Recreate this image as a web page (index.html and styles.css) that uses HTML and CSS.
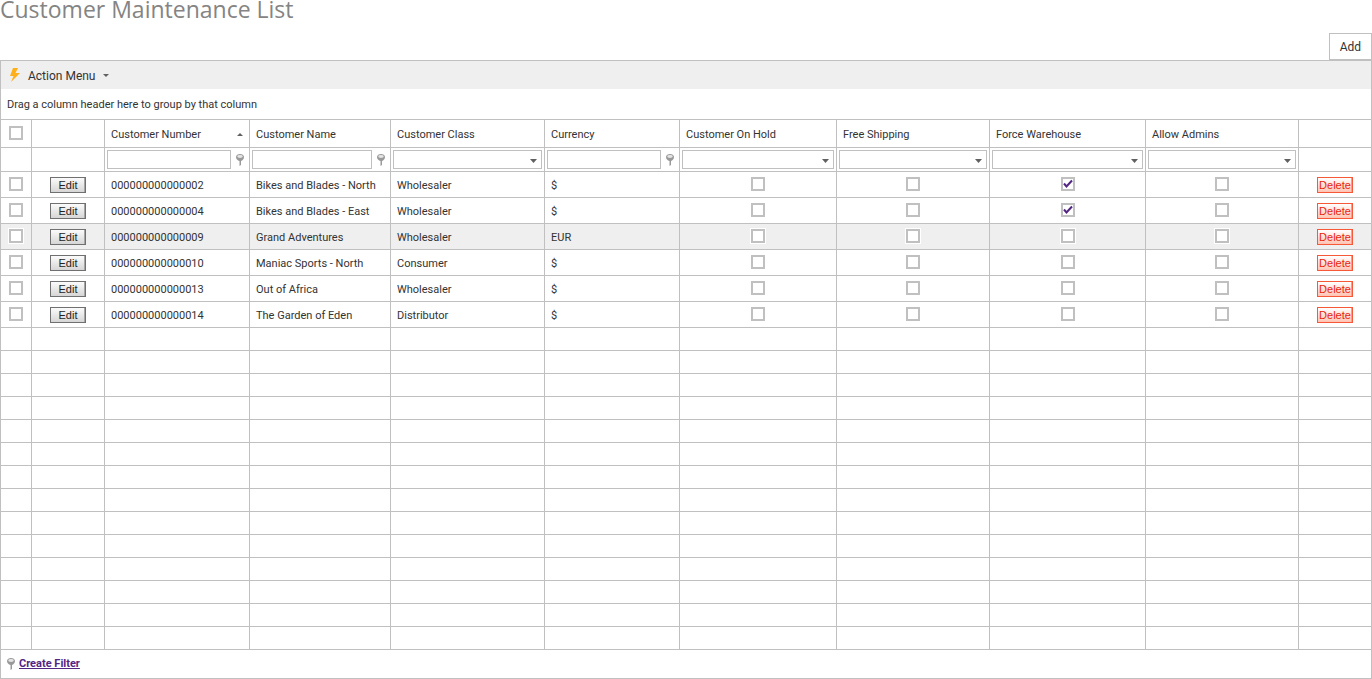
FILE: index.html
```html
<!DOCTYPE html>
<html lang="en">

<head>
  <meta charset="UTF-8">
  <meta name="viewport" content="width=device-width, initial-scale=1.0">
  <title>Customer Maintenance List</title>
  <link rel="stylesheet" href="styles.css">
</head>

<body>
  <!-- shared filter icon -->
  <svg class="defs" width="0" height="0" aria-hidden="true">
    <symbol id="pin" viewBox="0 0 9 12">
      <path d="M0 3C0 1 2 0 4 0S8 1 8 3C8 5 6.500 6.500 5 7V11L3.500 12V7C1.500 6.500 0 5 0 3Z" fill="#999" />
      <ellipse cx="4" cy="2.500" rx="2.800" ry="1.400" fill="#e4e4e4" />
    </symbol>
  </svg>

  <header class="page-header">
    <h1>Customer Maintenance List</h1>
    <button type="button" class="add">Add</button>
  </header>

  <main class="grid">
    <div class="toolbar">
      <button type="button" class="action-menu">
        <svg class="bolt" viewBox="0 0 11 14" aria-hidden="true">
          <path d="M4 0H9L6.500 5H11L2 14L4.500 8H1Z" fill="#fdb01a" />
        </svg>
        <span>Action Menu</span>
        <i class="caret"></i>
      </button>
    </div>
    <div class="group-panel">Drag a column header here to group by that column</div>

    <table>
      <colgroup>
        <col class="c-select">
        <col class="c-edit">
        <col class="c-number">
        <col class="c-name">
        <col class="c-class">
        <col class="c-currency">
        <col class="c-hold">
        <col class="c-shipping">
        <col class="c-warehouse">
        <col class="c-admins">
        <col class="c-delete">
      </colgroup>
      <thead>
        <tr class="titles">
          <th class="center"><input type="checkbox" aria-label="Select all"></th>
          <th></th>
          <th><div class="sorted">Customer Number <i class="sort-asc"></i></div></th>
          <th>Customer Name</th>
          <th>Customer Class</th>
          <th>Currency</th>
          <th>Customer On Hold</th>
          <th>Free Shipping</th>
          <th>Force Warehouse</th>
          <th>Allow Admins</th>
          <th></th>
        </tr>
        <tr class="filters">
          <td></td>
          <td></td>
          <td><div class="filter"><input type="text" aria-label="Filter customer number"><svg class="pin"><use href="#pin" /></svg></div></td>
          <td><div class="filter"><input type="text" aria-label="Filter customer name"><svg class="pin"><use href="#pin" /></svg></div></td>
          <td><div class="filter"><select aria-label="Filter customer class"><option></option></select></div></td>
          <td><div class="filter"><input type="text" aria-label="Filter currency"><svg class="pin"><use href="#pin" /></svg></div></td>
          <td><div class="filter"><select aria-label="Filter customer on hold"><option></option></select></div></td>
          <td><div class="filter"><select aria-label="Filter free shipping"><option></option></select></div></td>
          <td><div class="filter"><select aria-label="Filter force warehouse"><option></option></select></div></td>
          <td><div class="filter"><select aria-label="Filter allow admins"><option></option></select></div></td>
          <td></td>
        </tr>
      </thead>
      <tbody id="rows"></tbody>
    </table>

    <footer class="filter-bar">
      <svg class="pin"><use href="#pin" /></svg>
      <a href="#">Create Filter</a>
    </footer>
  </main>

  <script src="script.js"></script>
</body>

</html>
```
FILE: styles.css
```css
* {
  margin: 0;
  padding: 0;
  box-sizing: border-box;
}

body {
  font-family: Roboto, "Open Sans", sans-serif;
  font-size: 11px;
  line-height: 16px;
  color: #333;
  background-color: #fff;
}

button,
input,
select {
  font-family: inherit;
  color: inherit;
  border-radius: 0;
}

.defs {
  position: absolute;
}

.page-header {
  display: flex;
  justify-content: space-between;
  align-items: flex-end;
  height: 60px;
}

h1 {
  align-self: flex-start;
  font-family: "Open Sans", "Noto Sans", sans-serif;
  font-size: 23px;
  line-height: 18px;
  font-weight: 400;
  color: #848484;
}

.add {
  padding: 5px 10px 3px;
  border: 1px solid #c0c0c0;
  background-color: #fff;
  font-size: 12px;
  line-height: 17px;
}

.grid {
  border: 1px solid #c0c0c0;
}

.toolbar {
  padding: 0 8px;
  background-color: #efefef;
}

.action-menu {
  display: flex;
  align-items: center;
  gap: 8px;
  height: 28px;
  border: none;
  background: none;
  font-size: 12px;
}

.action-menu span {
  padding-top: 2px;
}

.bolt {
  width: 11px;
  height: 14px;
}

.caret,
.sort-asc {
  border: 3px solid transparent;
}

.caret {
  border-top-color: #606060;
  border-bottom-width: 0;
}

.sort-asc {
  border-bottom-color: #606060;
  border-top-width: 0;
}

.group-panel {
  padding: 8px 6px 6px;
  border-bottom: 1px solid #c0c0c0;
}

/* table */
table {
  width: 100%;
  table-layout: fixed;
  border-spacing: 0;
}

.c-select { width: 31px; }
.c-edit { width: 73px; }
.c-number { width: 145px; }
.c-name { width: 141px; }
.c-class { width: 154px; }
.c-currency { width: 135px; }
.c-hold { width: 157px; }
.c-shipping { width: 153px; }
.c-warehouse { width: 156px; }
.c-admins { width: 153px; }
.c-delete { width: 72px; }

th,
td {
  padding: 2px 6px 0;
  border-right: 1px solid #c0c0c0;
  border-bottom: 1px solid #c0c0c0;
  font-weight: 400;
  text-align: left;
  white-space: nowrap;
}

th:last-child,
td:last-child {
  border-right: none;
}

.titles th {
  height: 28px;
}

.data td {
  height: 26px;
}

.empty td {
  height: 23px;
}

.selected td {
  background-color: #efefef;
}

th.center,
td.center {
  padding: 0;
  text-align: center;
}

.sorted {
  display: flex;
  align-items: center;
  justify-content: space-between;
}

.filters td {
  height: 24px;
  padding: 2px;
}

.filter {
  display: flex;
  align-items: center;
}

.filter input,
.filter select {
  flex: 1;
  min-width: 0;
  height: 19px;
  border: 1px solid #c0c0c0;
  background-color: #fff;
}

.filter select {
  appearance: none;
  background-image: url("data:image/svg+xml,%3Csvg xmlns='http://www.w3.org/2000/svg' width='7' height='4'%3E%3Cpath d='M0 0H7L3.500 4Z' fill='%23606060'/%3E%3C/svg%3E");
  background-repeat: no-repeat;
  background-position: right 4px top 8px;
}

.pin {
  flex: none;
  width: 9px;
  height: 12px;
}

.filter .pin {
  margin: 0 2px 0 5px;
}

input[type="checkbox"] {
  appearance: none;
  display: block;
  width: 14px;
  height: 14px;
  margin: 0 auto 1px;
  border: 2px solid #c0c0c0;
  background-color: #fff;
  box-shadow: 0 0 0 1px #fff;
}

input[type="checkbox"]:checked {
  background-image: url("data:image/svg+xml,%3Csvg xmlns='http://www.w3.org/2000/svg' width='10' height='10'%3E%3Cpath d='M1 4.500L3.500 7.500L9 1.500' fill='none' stroke='%23522583' stroke-width='2'/%3E%3C/svg%3E");
}

.edit,
.delete {
  display: block;
  width: 36px;
  height: 16px;
  margin: 0 auto;
  border: 1px solid #707070;
  background-image: linear-gradient(#fbfbfb, #d6d6d6);
  box-shadow: inset -1px 0 0 #a6a6a6;
  font-family: "Liberation Sans", Arial, sans-serif;
  font-size: 11px;
  line-height: 14px;
  color: #222;
}

.delete {
  border-color: #f75838;
  background-image: linear-gradient(#fff, #ffc4b4);
  box-shadow: inset -1px 0 0 #ff9c86;
  color: #e8240c;
}

.filter-bar {
  display: flex;
  align-items: center;
  gap: 3px;
  height: 28px;
  padding: 0 6px 1px;
}

.filter-bar a {
  font-weight: 700;
  color: #522583;
}
```
FILE: script.js
```js
const customers = [
  { number: "000000000000002", name: "Bikes and Blades - North", type: "Wholesaler", currency: "$", warehouse: true },
  { number: "000000000000004", name: "Bikes and Blades - East", type: "Wholesaler", currency: "$", warehouse: true },
  { number: "000000000000009", name: "Grand Adventures", type: "Wholesaler", currency: "EUR", selected: true },
  { number: "000000000000010", name: "Maniac Sports - North", type: "Consumer", currency: "$" },
  { number: "000000000000013", name: "Out of Africa", type: "Wholesaler", currency: "$" },
  { number: "000000000000014", name: "The Garden of Eden", type: "Distributor", currency: "$" },
];
const emptyRows = 14;

const checkCell = (label, checked) =>
  `<td class="center"><input type="checkbox" aria-label="${label}" ${checked ? "checked" : ""}></td>`;

const customerRow = (c) => `
  <tr class="data ${c.selected ? "selected" : ""}">
    ${checkCell("Select " + c.name)}
    <td class="center"><button type="button" class="edit">Edit</button></td>
    <td>${c.number}</td>
    <td>${c.name}</td>
    <td>${c.type}</td>
    <td>${c.currency}</td>
    ${checkCell("Customer On Hold")}
    ${checkCell("Free Shipping")}
    ${checkCell("Force Warehouse", c.warehouse)}
    ${checkCell("Allow Admins")}
    <td class="center"><button type="button" class="delete">Delete</button></td>
  </tr>`;

const emptyRow = `<tr class="empty">${"<td></td>".repeat(11)}</tr>`;

document.querySelector("#rows").innerHTML =
  customers.map(customerRow).join("") + emptyRow.repeat(emptyRows);
```
